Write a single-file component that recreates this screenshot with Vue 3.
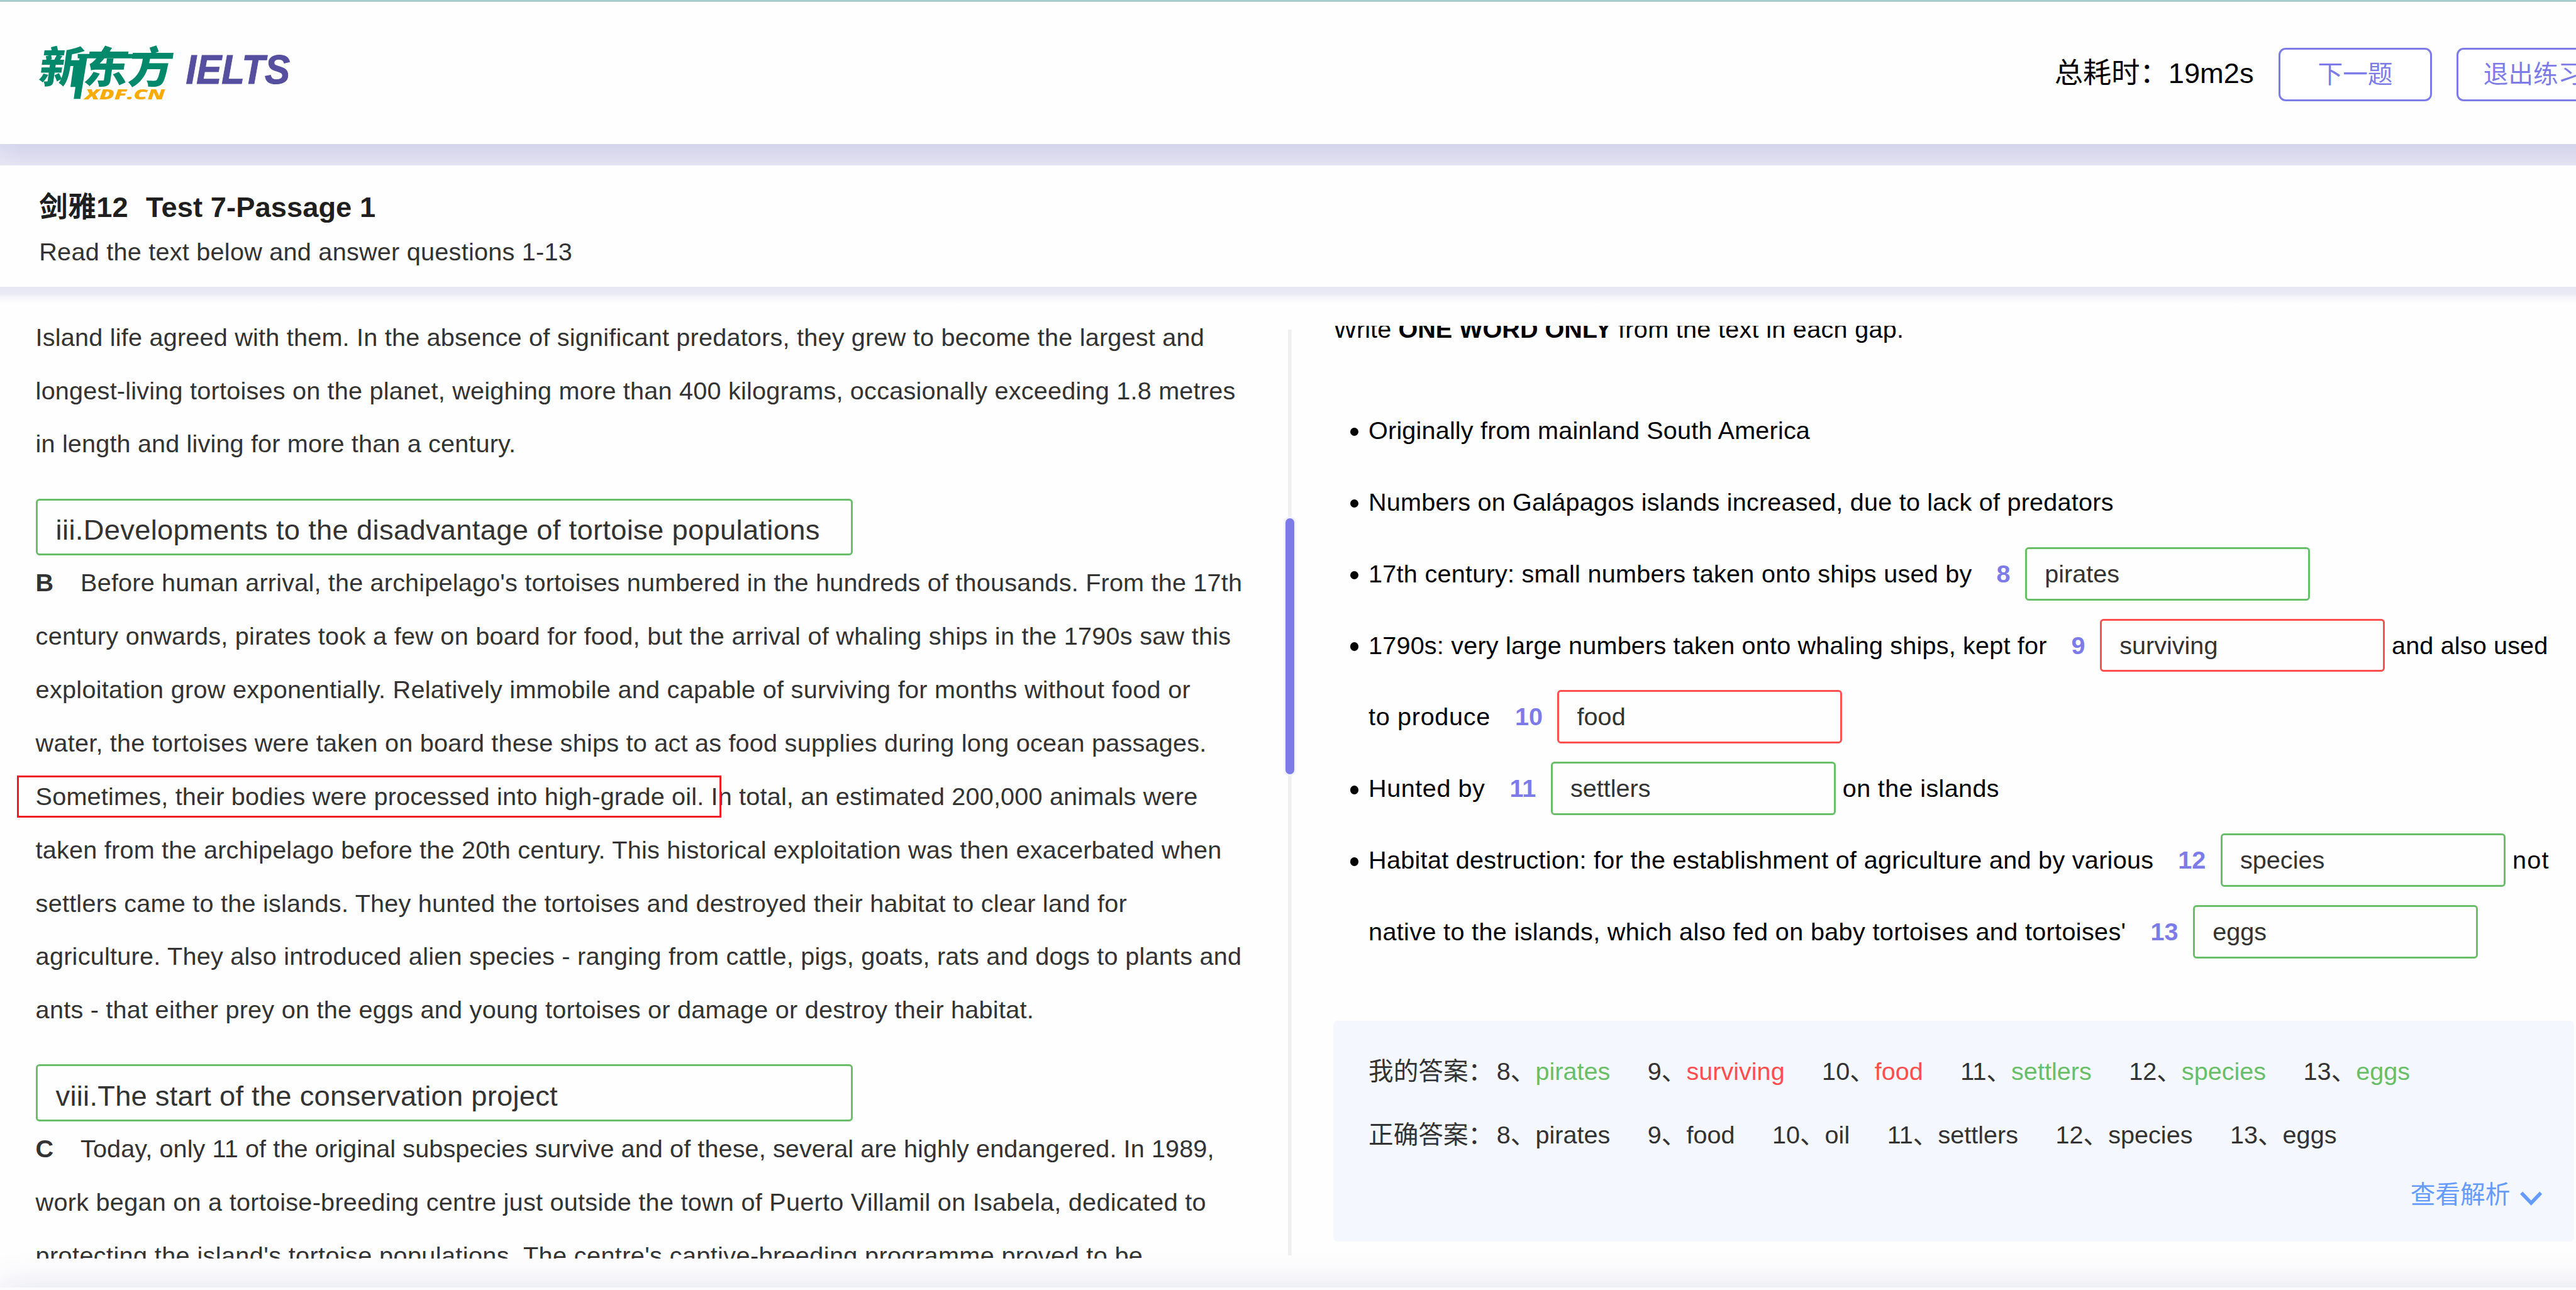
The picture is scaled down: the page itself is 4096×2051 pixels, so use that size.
<script setup>
// Lengths are design pixels: 100 of them make 1rem.
const intro = [
  { text: 'Island life agreed with them. In the absence of significant predators, they grew to become the largest and', w: 2626 },
  { text: 'longest-living tortoises on the planet, weighing more than 400 kilograms, occasionally exceeding 1.8 metres', w: 2696 },
  { text: 'in length and living for more than a century.', w: 1079 }
]

const sections = [
  {
    heading: 'iii.Developments to the disadvantage of tortoise populations',
    headingWidth: 1717,
    letter: 'B',
    lines: [
      { text: "Before human arrival, the archipelago's tortoises numbered in the hundreds of thousands. From the 17th", w: 2610 },
      { text: 'century onwards, pirates took a few on board for food, but the arrival of whaling ships in the 1790s saw this', w: 2686 },
      { text: 'exploitation grow exponentially. Relatively immobile and capable of surviving for months without food or', w: 2595 },
      { text: 'water, the tortoises were taken on board these ships to act as food supplies during long ocean passages.', w: 2631 },
      { text: 'Sometimes, their bodies were processed into high-grade oil. In total, an estimated 200,000 animals were', w: 2611, marked: true },
      { text: 'taken from the archipelago before the 20th century. This historical exploitation was then exacerbated when', w: 2665 },
      { text: 'settlers came to the islands. They hunted the tortoises and destroyed their habitat to clear land for', w: 2452 },
      { text: 'agriculture. They also introduced alien species - ranging from cattle, pigs, goats, rats and dogs to plants and', w: 2710 },
      { text: 'ants - that either prey on the eggs and young tortoises or damage or destroy their habitat.', w: 2243 }
    ]
  },
  {
    heading: 'viii.The start of the conservation project',
    headingWidth: 1128,
    letter: 'C',
    lines: [
      { text: 'Today, only 11 of the original subspecies survive and of these, several are highly endangered. In 1989,', w: 2547 },
      { text: 'work began on a tortoise-breeding centre just outside the town of Puerto Villamil on Isabela, dedicated to', w: 2630 },
      { text: "protecting the island's tortoise populations. The centre's captive-breeding programme proved to be", w: 2488 }
    ]
  }
]

const rows = [
  { bullet: true, before: 'Originally from mainland South America', w: 992 },
  { bullet: true, before: 'Numbers on Galápagos islands increased, due to lack of predators', w: 1674 },
  { bullet: true, before: '17th century: small numbers taken onto ships used by', w: 1356, no: 8, value: 'pirates', ok: true },
  { bullet: true, before: '1790s: very large numbers taken onto whaling ships, kept for', w: 1524, no: 9, value: 'surviving', ok: false, after: 'and also used', aw: 351 },
  { before: 'to produce', w: 274, no: 10, value: 'food', ok: false },
  { bullet: true, before: 'Hunted by', w: 262, no: 11, value: 'settlers', ok: true, after: 'on the islands', aw: 352 },
  { bullet: true, before: 'Habitat destruction: for the establishment of agriculture and by various', w: 1764, no: 12, value: 'species', ok: true, after: 'not', aw: 83 },
  { before: "native to the islands, which also fed on baby tortoises and tortoises'", w: 1702, no: 13, value: 'eggs', ok: true }
]

const mine = rows.filter((r) => r.no)
const correct = [
  { no: 8, value: 'pirates' },
  { no: 9, value: 'food' },
  { no: 10, value: 'oil' },
  { no: 11, value: 'settlers' },
  { no: 12, value: 'species' },
  { no: 13, value: 'eggs' }
]

// Spreads a line of text evenly over its design width.
const vFit = {
  mounted(el, { value }) {
    const unit = parseFloat(getComputedStyle(document.documentElement).fontSize) / 100
    const natural = el.getBoundingClientRect().width
    el.style.letterSpacing = (value * unit - natural) / el.textContent.length + 'px'
  }
}
</script>

<template>
  <div class="page">
    <header class="topbar">
      <svg class="logo" viewBox="0 0 564 120" role="img" aria-label="新东方 IELTS">
        <g transform="skewX(-8)">
          <text class="logo-cn" x="9" y="84" textLength="300" lengthAdjust="spacingAndGlyphs">新东方</text>
        </g>
        <path class="logo-bar" d="M87 18H300L298 28H87ZM91 28H108L93 119H78Z" />
        <text class="logo-xdf" x="103" y="119.500" textLength="180" lengthAdjust="spacingAndGlyphs">XDF.CN</text>
        <text class="logo-ielts" x="330" y="85" textLength="234" lengthAdjust="spacingAndGlyphs">IELTS</text>
      </svg>
      <div class="actions">
        <span class="timer">总耗时：<span v-fit="192" class="fit">19m2s</span></span>
        <button class="btn">下一题</button>
        <button class="btn">退出练习</button>
      </div>
    </header>

    <div class="band"></div>

    <section class="title-card">
      <h1><span v-fit="200" class="fit book">剑雅12</span><span v-fit="516" class="fit">Test 7-Passage 1</span></h1>
      <p><span v-fit="1198" class="fit">Read the text below and answer questions 1-13</span></p>
    </section>

    <main class="panes">
      <article class="passage">
        <p v-for="l in intro" :key="l.text" class="line"><span v-fit="l.w" class="fit">{{ l.text }}</span></p>
        <template v-for="s in sections" :key="s.letter">
          <div class="heading-box"><span v-fit="s.headingWidth" class="fit">{{ s.heading }}</span></div>
          <p v-for="(l, i) in s.lines" :key="l.text" class="line">
            <b v-if="i === 0" class="letter">{{ s.letter }}</b>
            <span v-fit="l.w" class="fit">{{ l.text }}</span>
            <i v-if="l.marked" class="mark"></i>
          </p>
        </template>
      </article>

      <div class="splitter"><div class="handle"></div></div>

      <section class="questions">
        <p class="instruction">
          <span v-fit="146" class="fit">Write </span><b v-fit="494" class="fit">ONE WORD ONLY </b><span v-fit="642" class="fit">from the text in each gap.</span>
        </p>
        <ul class="rows">
          <li v-for="r in rows" :key="r.before" class="row">
            <span class="gutter"><i v-if="r.bullet" class="dot"></i></span>
            <span v-fit="r.w" class="fit">{{ r.before }}</span>
            <template v-if="r.no">
              <b class="no">{{ r.no }}</b>
              <span class="blank" :class="r.ok ? 'right' : 'wrong'">{{ r.value }}</span>
            </template>
            <span v-if="r.after" v-fit="r.aw" class="fit after">{{ r.after }}</span>
          </li>
        </ul>

        <div class="answers">
          <div class="answer-row">
            <span class="label">我的答案：</span>
            <span v-for="a in mine" :key="a.no" class="answer">{{ a.no }}、<span :class="a.ok ? 'good' : 'bad'">{{ a.value }}</span></span>
          </div>
          <div class="answer-row">
            <span class="label">正确答案：</span>
            <span v-for="a in correct" :key="a.no" class="answer">{{ a.no }}、<span>{{ a.value }}</span></span>
          </div>
          <div class="more">
            <span>查看解析</span>
            <svg viewBox="0 0 50 32" class="chevron"><path d="M3 3.500L25 26.500L47 3.500" /></svg>
          </div>
        </div>
      </section>
    </main>

    <footer class="bottom"></footer>
  </div>
</template>

<style>
html {
  font-size: calc(100vw / 57.88);
}
body {
  margin: 0;
  overflow: hidden;
}
</style>

<style scoped>
.page {
  display: flex;
  flex-direction: column;
  width: 57.88rem;
  height: 28.98rem;
  overflow: hidden;
  background: #fefefe;
  color: #333;
  font-family: "Liberation Sans", "Noto Sans CJK SC", sans-serif;
  font-size: 0.56rem;
  white-space: nowrap;
}
h1, p, ul {
  margin: 0;
  padding: 0;
}
.fit {
  display: inline-block;
  flex: none;
  white-space: pre;
}

.topbar {
  box-sizing: border-box;
  flex: none;
  display: flex;
  align-items: flex-start;
  justify-content: space-between;
  height: 3.24rem;
  padding-left: 0.88rem;
  border-top: 0.02rem solid #b2dfe0;
  box-shadow: inset 0 0.02rem #8fb5b8;
}
.logo {
  width: 5.64rem;
  height: 1.2rem;
  margin-top: 1.02rem;
  overflow: visible;
}
.logo-cn {
  font: 900 97px "Noto Sans CJK SC", sans-serif;
  fill: #02896c;
}
.logo-bar {
  fill: #02896c;
}
.logo-xdf {
  font: italic 800 33px "Open Sans", sans-serif;
  fill: #f8ab00;
}
.logo-ielts {
  font: italic 700 91px "Liberation Sans", sans-serif;
  fill: #564f9f;
  stroke: #564f9f;
  stroke-width: 1.5;
}
.actions {
  display: flex;
  align-items: center;
  height: 1.2rem;
  margin-top: 1.06rem;
  margin-right: -0.76rem;
}
.timer {
  width: 5.04rem;
  margin-top: -0.04rem;
  color: #000;
  font-size: 0.64rem;
  line-height: 1.2rem;
}
.btn {
  box-sizing: border-box;
  width: 3.44rem;
  height: 1.2rem;
  margin: 0 0.56rem 0 0;
  padding: 0;
  border: 3px solid #7d7be8;
  border-radius: 0.16rem;
  background: #fff;
  color: #7d7be8;
  font: inherit;
  line-height: 1.12rem;
}
.btn:last-child {
  margin-right: 0;
}

.band {
  flex: none;
  height: 0.48rem;
  background:
    linear-gradient(90deg, rgba(240, 240, 248, 0.25), rgba(240, 240, 248, 0) 0.5rem),
    linear-gradient(#d3d3ec, #d9d9ee 40%, #e4e3f2);
}

.title-card {
  box-sizing: border-box;
  flex: none;
  height: 2.72rem;
  padding: 0.5rem 0 0 0.88rem;
}
.title-card h1 {
  color: #1f1f1f;
  font-size: 0.64rem;
  font-weight: 700;
  line-height: 0.88rem;
}
.book {
  margin-right: 0.4rem;
}
.title-card p {
  margin-top: 0.15rem;
  line-height: 0.8rem;
}

.panes {
  flex: none;
  display: flex;
  height: 22.48rem;
  background: linear-gradient(#e6e5f2, #ebebf6 0.15rem, #f8f8fc 0.27rem, #fefefe 0.38rem) no-repeat;
}
.passage {
  box-sizing: border-box;
  width: 28.88rem;
  height: 21.84rem;
  padding: 0.536rem 0 0 0.8rem;
  overflow: hidden;
}
.line {
  position: relative;
  height: 1.2rem;
  line-height: 1.2rem;
}
.letter {
  display: inline-block;
  width: 1.01rem;
}
.mark {
  position: absolute;
  top: 0.13rem;
  left: -0.42rem;
  box-sizing: border-box;
  width: 15.83rem;
  height: 0.95rem;
  border: 3px solid #ed1c24;
}
.heading-box {
  box-sizing: border-box;
  width: 18.36rem;
  height: 1.28rem;
  margin: 0.624rem 0 0.014rem;
  padding: 0.075rem 0 0 0.41rem;
  border: 3px solid #69bf69;
  border-radius: 0.08rem;
  font-size: 0.64rem;
  line-height: 1.2rem;
}

.splitter {
  display: flex;
  justify-content: center;
  width: 0.2rem;
  height: 20.8rem;
  margin-top: 0.96rem;
  background: linear-gradient(#efefef, #efefef) center / 0.08rem 100% no-repeat;
}
.handle {
  width: 0.2rem;
  height: 5.76rem;
  margin-top: 4.24rem;
  border-radius: 0.1rem;
  background: #7d7be8;
  box-shadow: 0 0 0 0.04rem #f1f1fc;
}

.questions {
  box-sizing: border-box;
  width: 28.8rem;
  height: 20.95rem;
  margin-top: 0.875rem;
  padding-left: 0.88rem;
  overflow: hidden;
  color: #000;
}
.instruction {
  height: 1.2rem;
  margin-top: -0.515rem;
  line-height: 1.2rem;
}
.rows {
  margin-top: 0.865rem;
  list-style: none;
}
.row {
  display: flex;
  align-items: center;
  height: 1.61rem;
}
.gutter {
  flex: none;
  width: 0.79rem;
}
.dot {
  display: block;
  width: 0.19rem;
  height: 0.19rem;
  margin: 0.06rem 0 0 0.38rem;
  border-radius: 50%;
  background: #000;
}
.no {
  margin: 0 0.33rem 0 0.55rem;
  color: #7d7be8;
}
.blank {
  box-sizing: border-box;
  width: 6.4rem;
  height: 1.2rem;
  padding-left: 0.4rem;
  border: 3px solid;
  border-radius: 0.08rem;
  color: #333;
  line-height: 1.13rem;
}
.right {
  border-color: #69bf69;
}
.wrong {
  border-color: #ff4f4f;
}
.after {
  margin-left: 0.16rem;
}

.answers {
  box-sizing: border-box;
  width: 27.88rem;
  height: 4.96rem;
  margin-top: 1.185rem;
  padding: 0.41rem 0.72rem 0 0.79rem;
  border-radius: 0.1rem;
  background: #f4f7fe;
  color: #333;
}
.answer-row {
  display: flex;
  height: 1.44rem;
  line-height: 1.45rem;
}
.label {
  margin-right: 0.08rem;
}
.answer {
  margin-right: 0.84rem;
}
.good {
  color: #69bf69;
}
.bad {
  color: #ff4f4f;
}
.more {
  display: flex;
  justify-content: flex-end;
  align-items: center;
  height: 1.14rem;
  color: #669cff;
}
.chevron {
  width: 0.5rem;
  height: 0.32rem;
  margin: 0.27rem 0 0 0.22rem;
  fill: none;
  stroke: currentColor;
  stroke-width: 8;
}

.bottom {
  flex: none;
  width: 60rem;
  height: 2rem;
  background: #fbfbfe;
  box-shadow: 0 0 0.8rem rgba(90, 90, 170, 0.19);
}
</style>
